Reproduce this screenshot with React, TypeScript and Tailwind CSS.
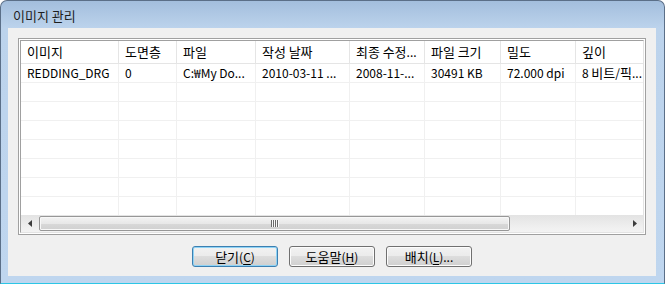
import React from "react";

const headers = ["이미지", "도면층", "파일", "작성 날짜", "최종 수정...", "파일 크기", "밀도", "깊이"];
const row1 = ["REDDING_DRG", "0", "C:₩My Do...", "2010-03-11 ...", "2008-11-...", "30491 KB", "72.000 dpi", "8 비트/픽..."];

const gridCols = "grid grid-cols-[98px_58px_79px_94px_75px_76px_75px_90px]";

function K({ t }: { t: string }) {
  const parts = t.split(/([\uAC00-\uD7A3]+)/);
  return (
    <>
      {parts.map((p, i) =>
        /[\uAC00-\uD7A3]/.test(p) ? (
          <span key={i} className="text-[13px]">
            {p}
          </span>
        ) : (
          <span key={i}>{p}</span>
        )
      )}
    </>
  );
}

function Btn({ label, accel, tail, def }: { label: string; accel: string; tail: string; def?: boolean }) {
  return (
    <div
      className={
        "w-[86px] h-[21px] rounded-[3px] border flex items-center justify-center text-[12px] leading-none text-black bg-[linear-gradient(to_bottom,#f2f2f2_0%,#ebebeb_50%,#dddddd_50%,#cfcfcf_100%)] " +
        (def
          ? "border-[#3c7fb1] shadow-[inset_0_0_0_1px_#8fd3f5]"
          : "border-[#707070] shadow-[inset_0_0_0_1px_#fcfcfc]")
      }
    >
      <span className="whitespace-nowrap">
        <K t={label} />
        (<span className="underline underline-offset-2">{accel}</span>){tail}
      </span>
    </div>
  );
}

export default function App() {
  return (
    <div className="w-[665px] h-[284px] overflow-hidden font-['Noto_Sans_CJK_KR','Noto_Sans',sans-serif]">
      <div className="w-[665px] h-[284px] flex flex-col rounded-t-[7px] border-x border-t border-[#5b6f88] border-b border-b-[#2cc6e6] bg-[linear-gradient(to_bottom,#a3bedd_0px,#bcd3ec_27px,#bfd6ef_100%)]">
        <div className="h-[27px] pl-[12px] flex items-center text-[13px] text-[#1e1e1e] pt-[2px]">이미지 관리</div>
        <div className="ml-[7px] mr-[8px] h-[248px] bg-[#f0f0f0] flex flex-col">
          <div className="ml-[10px] mt-[10px] w-[628px] h-[197px] border border-[#a0a0a0] bg-white p-[1px]">
            <div className="w-full h-full border-l border-t border-[#a0a0a0] border-r border-r-[#e3e3e3] border-b border-b-[#e3e3e3] flex flex-col overflow-hidden">
              <div className={gridCols + " h-[23px] shrink-0 border-b border-[#e5e5e5] bg-white text-[12px] text-black"}>
                {headers.map((h, i) => (
                  <div key={i} className="border-r border-[#e5e5e5] pl-[6px] flex items-center whitespace-nowrap overflow-hidden">
                    <span>
                      <K t={h} />
                    </span>
                  </div>
                ))}
              </div>
              <div className="h-[151px] shrink-0 overflow-hidden">
                {Array.from({ length: 8 }).map((_, r) => (
                  <div key={r} className={gridCols + " h-[19px] border-b border-[#f0f0f0] text-[12px] text-black"}>
                    {headers.map((_, i) => (
                      <div key={i} className="border-r border-[#f0f0f0] pl-[6px] flex items-center whitespace-nowrap overflow-hidden">
                        {r === 0 ? (
                          <span>
                            <K t={row1[i]} />
                          </span>
                        ) : null}
                      </div>
                    ))}
                  </div>
                ))}
              </div>
              <div className="h-[17px] shrink-0 flex bg-[linear-gradient(to_bottom,#e3e3e3,#efefef_70%,#f3f3f3)]">
                <div className="w-[17px] h-full flex items-center justify-center">
                  <svg width="4" height="7" viewBox="0 0 4 7">
                    <path d="M4 0 L0 3.5 L4 7 Z" fill="#3c3c3c" />
                  </svg>
                </div>
                <div className="flex-1 h-full">
                  <div className="ml-[1px] my-[1px] w-[471px] h-[15px] rounded-[2px] border border-[#979797] shadow-[inset_0_0_0_1px_#f8f8f8] bg-[linear-gradient(to_bottom,#f3f3f3_0%,#e8e8e8_50%,#d9d9d9_50%,#d0d0d0_100%)] flex items-center justify-center">
                    <svg width="8" height="7" viewBox="0 0 8 7">
                      <rect x="0" y="0" width="1" height="7" fill="#6b6b6b" />
                      <rect x="1" y="0" width="1" height="7" fill="#fafafa" />
                      <rect x="2" y="0" width="1" height="7" fill="#6b6b6b" />
                      <rect x="3" y="0" width="1" height="7" fill="#fafafa" />
                      <rect x="4" y="0" width="1" height="7" fill="#6b6b6b" />
                      <rect x="5" y="0" width="1" height="7" fill="#fafafa" />
                      <rect x="6" y="0" width="1" height="7" fill="#6b6b6b" />
                      <rect x="7" y="0" width="1" height="7" fill="#fafafa" />
                    </svg>
                  </div>
                </div>
                <div className="w-[17px] h-full flex items-center justify-center">
                  <svg width="4" height="7" viewBox="0 0 4 7">
                    <path d="M0 0 L4 3.5 L0 7 Z" fill="#3c3c3c" />
                  </svg>
                </div>
              </div>
            </div>
          </div>
          <div className="mt-[11px] flex justify-center gap-[11px]">
            <Btn label="닫기" accel="C" tail="" def />
            <Btn label="도움말" accel="H" tail="" />
            <Btn label="배치" accel="L" tail="..." />
          </div>
        </div>
        <div className="flex-1" />
      </div>
    </div>
  );
}
